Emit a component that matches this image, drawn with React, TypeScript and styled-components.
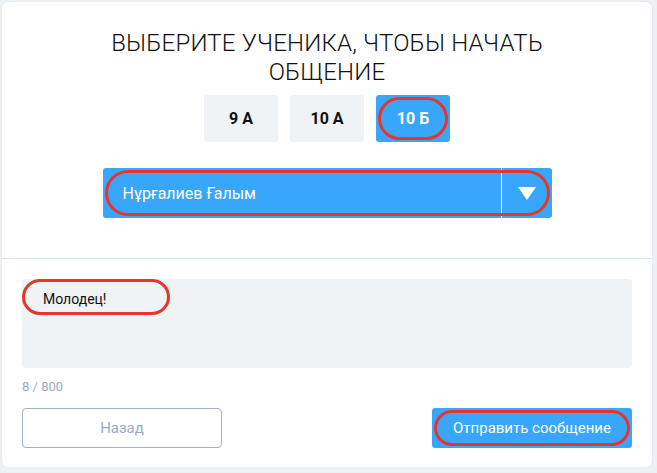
import { useState } from "react";
import styled, { createGlobalStyle } from "styled-components";

const classes = ["9 A", "10 A", "10 Б"];

function App() {
  const [selectedClass, setSelectedClass] = useState("10 Б");
  const [message, setMessage] = useState("Молодец!");

  return (
    <>
      <GlobalStyle />
      <Page>
        <Card>
          <TopSection>
            <Title>ВЫБЕРИТЕ УЧЕНИКА, ЧТОБЫ НАЧАТЬ<br />ОБЩЕНИЕ</Title>
            <ClassRow>
              {classes.map((name) => (
                <ClassButton
                  key={name}
                  $active={name === selectedClass}
                  onClick={() => setSelectedClass(name)}
                >
                  {name}
                  {name === selectedClass && <Ring />}
                </ClassButton>
              ))}
            </ClassRow>
            <Select>
              <SelectValue>Нұрғалиев Ғалым</SelectValue>
              <SelectArrow>
                <svg width="18" height="13" viewBox="0 0 18 13">
                  <path d="M0 0 H18 L9 13 Z" fill="#fff" />
                </svg>
              </SelectArrow>
              <Ring />
            </Select>
          </TopSection>
          <BottomSection>
            <MessageBox>
              <MessageInput
                value={message}
                maxLength={800}
                onChange={(e) => setMessage(e.target.value)}
              />
              <TextRing />
            </MessageBox>
            <Counter>{message.length} / 800</Counter>
            <Actions>
              <BackButton>Назад</BackButton>
              <SendButton>
                Отправить сообщение
                <Ring />
              </SendButton>
            </Actions>
          </BottomSection>
        </Card>
      </Page>
    </>
  );
}

export default App;

const GlobalStyle = createGlobalStyle`
  body {
    margin: 0;
    background: #eef1f4;
    font-family: Roboto, "Liberation Sans", sans-serif;
  }
`

const Page = styled.div`
  padding: 2px 5px 5px 2px;
`

const Card = styled.div`
  background: #fff;
  border-radius: 6px;
  box-shadow: 0 0 2px rgba(120, 140, 160, 0.15);
`

const TopSection = styled.div`
  display: flex;
  flex-direction: column;
  align-items: center;
  padding: 27px 20px 40px;
  border-bottom: 1px solid #d9e3ea;
`

const Title = styled.h1`
  margin: 0;
  font-size: 24px;
  line-height: 29px;
  font-weight: 300;
  color: #111;
  text-align: center;
  letter-spacing: 0.2px;
`

const ClassRow = styled.div`
  display: flex;
  gap: 12px;
  margin-top: 8px;
`

const ClassButton = styled.button<{ $active: boolean }>`
  position: relative;
  width: 74px;
  height: 47px;
  border: none;
  border-radius: 3px;
  background: ${(p) => (p.$active ? "#38a6fa" : "#eff3f6")};
  color: ${(p) => (p.$active ? "#fff" : "#111")};
  font-family: inherit;
  font-size: 16px;
  font-weight: 700;
  cursor: pointer;
`

const Ring = styled.span`
  position: absolute;
  inset: 2px;
  border: 3px solid #e8352c;
  border-radius: 999px;
  pointer-events: none;
`

const Select = styled.div`
  position: relative;
  display: flex;
  align-items: center;
  width: 449px;
  height: 50px;
  margin-top: 26px;
  background: #38a6fa;
  border-radius: 3px;
  color: #fff;
`

const SelectValue = styled.div`
  flex: 1;
  padding-left: 20px;
  font-size: 16px;
`

const SelectArrow = styled.div`
  display: flex;
  align-items: center;
  justify-content: center;
  width: 50px;
  height: 100%;
  border-left: 1px solid #fff;
`

const BottomSection = styled.div`
  padding: 20px 20px 19px;
`

const MessageBox = styled.div`
  position: relative;
`

const MessageInput = styled.textarea`
  display: block;
  box-sizing: border-box;
  width: 100%;
  height: 89px;
  padding: 12px 21px;
  border: none;
  border-radius: 4px;
  background: #eff3f6;
  font-family: inherit;
  font-size: 14px;
  color: #111;
  resize: none;
  outline: none;
`

const TextRing = styled(Ring)`
  inset: 0 auto auto 0;
  width: 148px;
  height: 36px;
  box-sizing: border-box;
`

const Counter = styled.div`
  margin-top: 11px;
  font-size: 13px;
  line-height: 16px;
  color: #9aabbf;
`

const Actions = styled.div`
  display: flex;
  justify-content: space-between;
  margin-top: 13px;
`

const BackButton = styled.button`
  width: 200px;
  height: 40px;
  box-sizing: border-box;
  border: 1px solid #9fb1c4;
  border-radius: 4px;
  background: #fff;
  color: #9aabbf;
  font-family: inherit;
  font-size: 15px;
`

const SendButton = styled.button`
  position: relative;
  width: 200px;
  height: 40px;
  border: none;
  border-radius: 3px;
  background: #38a6fa;
  color: #fff;
  font-family: inherit;
  font-size: 15px;
`
